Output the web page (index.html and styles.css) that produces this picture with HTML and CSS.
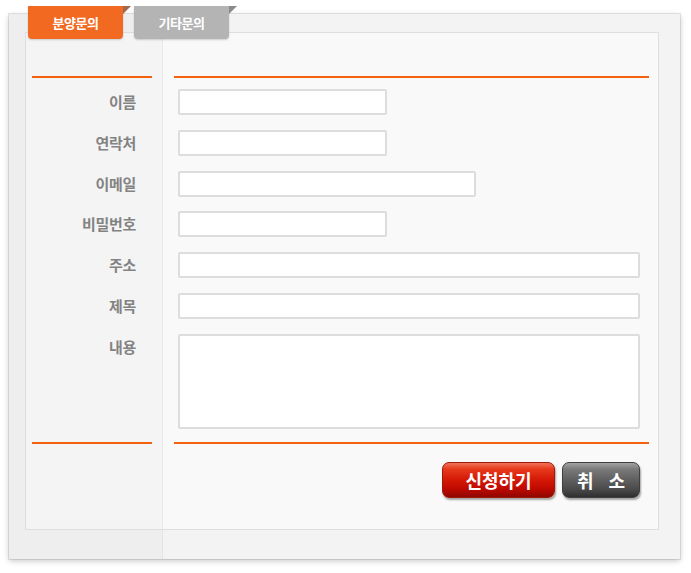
FILE: index.html
```html
<!DOCTYPE html>
<html lang="ko">
<head>
<meta charset="utf-8">
<title>분양문의</title>
<link rel="stylesheet" href="styles.css">
</head>
<body>
<div class="page">
  <div class="tabs">
    <div class="tab tab-on">분양문의<span class="fold fold-on"></span></div>
    <div class="tab tab-off">기타문의<span class="fold fold-off"></span></div>
  </div>
  <div class="outer">
    <div class="inner">
      <div class="rules rules-top"><span class="rule rule-l"></span><span class="rule rule-r"></span></div>
      <div class="rows">
        <div class="row"><label class="lbl">이름</label><div class="field"><input class="inp w-s" type="text"></div></div>
        <div class="row"><label class="lbl">연락처</label><div class="field"><input class="inp w-s" type="text"></div></div>
        <div class="row"><label class="lbl">이메일</label><div class="field"><input class="inp w-m" type="text"></div></div>
        <div class="row"><label class="lbl">비밀번호</label><div class="field"><input class="inp w-s" type="password"></div></div>
        <div class="row"><label class="lbl">주소</label><div class="field"><input class="inp w-l" type="text"></div></div>
        <div class="row"><label class="lbl">제목</label><div class="field"><input class="inp w-l" type="text"></div></div>
        <div class="row row-ta"><label class="lbl">내용</label><div class="field"><textarea class="inp ta w-l"></textarea></div></div>
      </div>
      <div class="rules rules-bot"><span class="rule rule-l"></span><span class="rule rule-r"></span></div>
      <div class="actions">
        <button class="btn btn-red" type="button">신청하기</button>
        <button class="btn btn-gray" type="button">취&nbsp;&nbsp;&nbsp;소</button>
      </div>
    </div>
  </div>
</div>
</body>
</html>
```
FILE: styles.css
```css
* { box-sizing: border-box; }
html, body { margin: 0; padding: 0; background: #ffffff; }
body { font-family: "Noto Sans CJK KR", "Noto Sans", "Liberation Sans", sans-serif; }

.page { padding-top: 6px; width: 691px; height: 573px; }

.tabs {
  display: flex;
  gap: 11px;
  margin-left: 28px;
  height: 33px;
  margin-bottom: -25px;
  position: relative;
  z-index: 2;
}
.tab {
  position: relative;
  width: 95px;
  height: 33px;
  border-radius: 0 0 4px 4px;
  color: #fff;
  font-size: 13px;
  font-weight: 700;
  line-height: 33px;
  text-align: center;
  letter-spacing: -0.4px;
  box-shadow: 0 1px 2px rgba(0,0,0,0.18);
}
.tab-on { background: #f26a22; }
.tab-off { background: #b4b4b4; }
.fold {
  position: absolute;
  top: 0;
  right: -8px;
  width: 0;
  height: 0;
  border-style: solid;
  border-width: 0 0 8px 8px;
}
.fold-on { border-color: transparent transparent transparent #a0694e; }
.fold-off { border-color: transparent transparent transparent #8a8a8a; }

.outer {
  margin-left: 9px;
  width: 671px;
  height: 545px;
  padding: 18px 21px 29px 16px;
  background: linear-gradient(to right, #eeeeee 0, #eeeeee 153px, #e4e4e4 153px, #e4e4e4 154px, #f3f3f3 154px);
  box-shadow: 0 2px 6px rgba(0,0,0,0.22), 0 0 0 1px #e8e8e8;
}
.inner {
  width: 634px;
  height: 498px;
  border: 1px solid #dedede;
  background: linear-gradient(to right, #f4f4f4 0, #f4f4f4 136px, #e9e9e9 136px, #e9e9e9 137px, #f9f9f9 137px);
  display: flex;
  flex-direction: column;
}

.rules { display: grid; grid-template-columns: 136px 1fr; height: 2px; }
.rules-top { margin-top: 43px; }
.rules-bot { margin-top: 13px; }
.rule { display: block; height: 2px; background: #f4620f; }
.rule-l { margin: 0 10px 0 6px; }
.rule-r { margin: 0 9px 0 12px; }

.rows { display: flex; flex-direction: column; gap: 14.75px; margin-top: 11px; }
.row { display: grid; grid-template-columns: 136px 1fr; height: 26px; align-items: center; }
.row-ta { height: 95px; align-items: start; }
.lbl {
  text-align: right;
  padding-right: 26px;
  color: #838383;
  font-size: 15px;
  font-weight: 700;
  line-height: 26px;
  letter-spacing: -0.3px;
}
.field { padding-left: 16px; display: flex; }
.inp {
  height: 26px;
  border: 2px solid #dddddd;
  border-radius: 2px;
  background: #ffffff;
  margin: 0;
  padding: 0 4px;
  font: inherit;
  outline: none;
}
.ta { height: 95px; resize: none; }
.w-s { width: 209px; }
.w-m { width: 298px; }
.w-l { width: 462px; }

.actions {
  display: flex;
  justify-content: flex-end;
  gap: 7px;
  margin-top: 18px;
  padding-right: 18px;
}
.btn {
  height: 36px;
  border-radius: 7px;
  color: #ffffff;
  font-family: inherit;
  font-size: 18px;
  font-weight: 700;
  padding: 0;
  line-height: 34px;
  cursor: pointer;
  box-shadow: 1px 2px 2px rgba(0,0,0,0.35);
}
.btn-red {
  width: 113px;
  border: 1px solid #9e1a08;
  background: linear-gradient(to bottom, #f0735a 0%, #e6391c 18%, #d41806 50%, #c00a00 75%, #8f0500 100%);
}
.btn-gray {
  width: 78px;
  border: 1px solid #3f3f3f;
  background: linear-gradient(to bottom, #a3a3a3 0%, #7a7a7a 18%, #5f5f5f 50%, #4c4c4c 75%, #2f2f2f 100%);
}
```
